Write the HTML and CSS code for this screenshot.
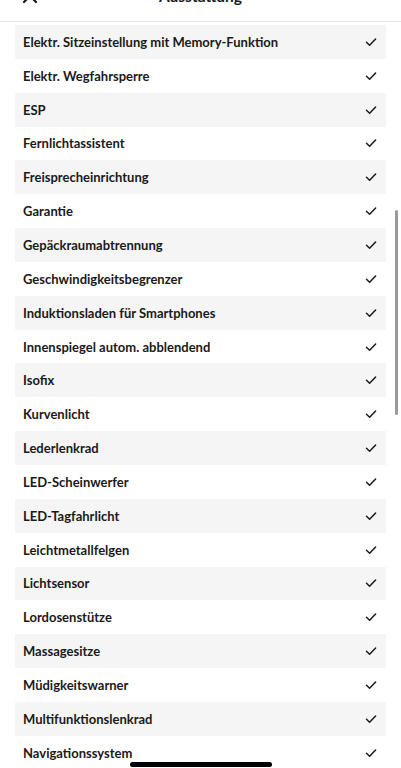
FILE: index.html
```html
<!DOCTYPE html>
<html lang="de">
<head>
    <meta charset="UTF-8">
    <meta name="viewport" content="width=device-width, initial-scale=1.0">
    <title>Ausstattung</title>
    <link rel="stylesheet" href="styles.css">
</head>
<body>
    <div class="screen">
        <div class="header">
            <a href="#" class="close-button">
                <svg width="16" height="16" viewBox="0 0 16 16"><path d="M2 2 L14 14 M14 2 L2 14" stroke="#1a1a1a" stroke-width="2.2" stroke-linecap="round"/></svg>
            </a>
            <div class="header-title">Ausstattung</div>
        </div>

        <ul class="feature-list">
            <li class="feature-row"><span>Elektr. Sitzeinstellung mit Memory-Funktion</span><svg class="check" viewBox="0 0 12 12"><path d="M1.5 6.3 L4.6 9.2 L10.6 3"/></svg></li>
            <li class="feature-row"><span>Elektr. Wegfahrsperre</span><svg class="check" viewBox="0 0 12 12"><path d="M1.5 6.3 L4.6 9.2 L10.6 3"/></svg></li>
            <li class="feature-row"><span>ESP</span><svg class="check" viewBox="0 0 12 12"><path d="M1.5 6.3 L4.6 9.2 L10.6 3"/></svg></li>
            <li class="feature-row"><span>Fernlichtassistent</span><svg class="check" viewBox="0 0 12 12"><path d="M1.5 6.3 L4.6 9.2 L10.6 3"/></svg></li>
            <li class="feature-row"><span>Freisprecheinrichtung</span><svg class="check" viewBox="0 0 12 12"><path d="M1.5 6.3 L4.6 9.2 L10.6 3"/></svg></li>
            <li class="feature-row"><span>Garantie</span><svg class="check" viewBox="0 0 12 12"><path d="M1.5 6.3 L4.6 9.2 L10.6 3"/></svg></li>
            <li class="feature-row"><span>Gepäckraumabtrennung</span><svg class="check" viewBox="0 0 12 12"><path d="M1.5 6.3 L4.6 9.2 L10.6 3"/></svg></li>
            <li class="feature-row"><span>Geschwindigkeitsbegrenzer</span><svg class="check" viewBox="0 0 12 12"><path d="M1.5 6.3 L4.6 9.2 L10.6 3"/></svg></li>
            <li class="feature-row"><span>Induktionsladen für Smartphones</span><svg class="check" viewBox="0 0 12 12"><path d="M1.5 6.3 L4.6 9.2 L10.6 3"/></svg></li>
            <li class="feature-row"><span>Innenspiegel autom. abblendend</span><svg class="check" viewBox="0 0 12 12"><path d="M1.5 6.3 L4.6 9.2 L10.6 3"/></svg></li>
            <li class="feature-row"><span>Isofix</span><svg class="check" viewBox="0 0 12 12"><path d="M1.5 6.3 L4.6 9.2 L10.6 3"/></svg></li>
            <li class="feature-row"><span>Kurvenlicht</span><svg class="check" viewBox="0 0 12 12"><path d="M1.5 6.3 L4.6 9.2 L10.6 3"/></svg></li>
            <li class="feature-row"><span>Lederlenkrad</span><svg class="check" viewBox="0 0 12 12"><path d="M1.5 6.3 L4.6 9.2 L10.6 3"/></svg></li>
            <li class="feature-row"><span>LED-Scheinwerfer</span><svg class="check" viewBox="0 0 12 12"><path d="M1.5 6.3 L4.6 9.2 L10.6 3"/></svg></li>
            <li class="feature-row"><span>LED-Tagfahrlicht</span><svg class="check" viewBox="0 0 12 12"><path d="M1.5 6.3 L4.6 9.2 L10.6 3"/></svg></li>
            <li class="feature-row"><span>Leichtmetallfelgen</span><svg class="check" viewBox="0 0 12 12"><path d="M1.5 6.3 L4.6 9.2 L10.6 3"/></svg></li>
            <li class="feature-row"><span>Lichtsensor</span><svg class="check" viewBox="0 0 12 12"><path d="M1.5 6.3 L4.6 9.2 L10.6 3"/></svg></li>
            <li class="feature-row"><span>Lordosenstütze</span><svg class="check" viewBox="0 0 12 12"><path d="M1.5 6.3 L4.6 9.2 L10.6 3"/></svg></li>
            <li class="feature-row"><span>Massagesitze</span><svg class="check" viewBox="0 0 12 12"><path d="M1.5 6.3 L4.6 9.2 L10.6 3"/></svg></li>
            <li class="feature-row"><span>Müdigkeitswarner</span><svg class="check" viewBox="0 0 12 12"><path d="M1.5 6.3 L4.6 9.2 L10.6 3"/></svg></li>
            <li class="feature-row"><span>Multifunktionslenkrad</span><svg class="check" viewBox="0 0 12 12"><path d="M1.5 6.3 L4.6 9.2 L10.6 3"/></svg></li>
            <li class="feature-row"><span>Navigationssystem</span><svg class="check" viewBox="0 0 12 12"><path d="M1.5 6.3 L4.6 9.2 L10.6 3"/></svg></li>
        </ul>
    </div>

    <div class="scrollbar"></div>
    <div class="home-indicator"></div>
</body>
</html>
```

FILE: styles.css
```css
html, body {
    margin: 0;
    padding: 0;
    height: 768px;
    overflow: hidden;
    background: #ffffff;
}

body {
    font-family: "Lato", "Open Sans", sans-serif;
    color: #1a1a1a;
    position: relative;
}

.screen {
    margin-top: -34px;
}

.header {
    height: 55px;
    display: flex;
    align-items: center;
    justify-content: center;
    position: relative;
    border-bottom: 1px solid #e6e6e6;
}

.header-title {
    font-size: 15.5px;
    font-weight: 700;
    margin-top: 5px;
}

.close-button {
    position: absolute;
    left: 22px;
    top: 22px;
    display: flex;
}

.feature-list {
    list-style: none;
    margin: 3px 15px 0;
    padding: 0;
}

.feature-row {
    height: 33.85px;
    display: flex;
    align-items: center;
    justify-content: space-between;
    padding: 0 9px 0 8px;
    font-size: 13px;
    font-weight: 700;
}

.feature-row:nth-child(odd) {
    background: #f5f5f5;
}

.check {
    width: 12px;
    height: 12px;
    fill: none;
    stroke: #1a1a1a;
    stroke-width: 1.5;
    stroke-linecap: round;
    stroke-linejoin: round;
}

.scrollbar {
    position: absolute;
    left: 395px;
    top: 210px;
    width: 3px;
    height: 205px;
    border-radius: 2px;
    background: #9a9a9a;
}

.home-indicator {
    position: absolute;
    left: 130px;
    top: 762px;
    width: 142px;
    height: 5px;
    border-radius: 3px;
    background: #000000;
}
```
